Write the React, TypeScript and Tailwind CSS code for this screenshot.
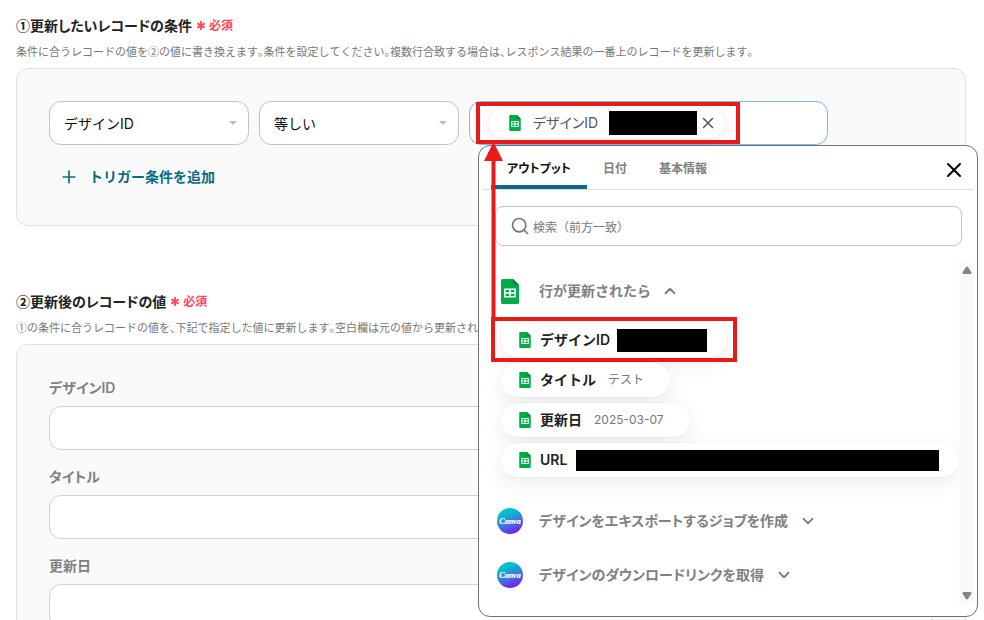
import { ChevronDown, ChevronUp, Plus, Search, X } from "lucide-react";
import type { ReactNode } from "react";

const palt = "[font-feature-settings:'palt'] [font-kerning:none]";

function SheetsIcon({ className }: { className: string }) {
  return (
    <svg viewBox="0 0 18 25" className={`shrink-0 ${className}`} aria-hidden="true">
      <path d="M1.5 0H12l6 6v17.5a1.5 1.5 0 0 1-1.5 1.5h-15A1.5 1.5 0 0 1 0 23.5v-22A1.5 1.5 0 0 1 1.5 0z" fill="#00ac47" />
      <path d="M12 0l6 6h-4.500A1.500 1.500 0 0 1 12 4.500z" fill="#00832d" />
      <path d="M3 9.500h12v9H3z" fill="#fff" />
      <path d="M4.600 11h3.600v2.300H4.600zM9.800 11h3.600v2.300H9.800zM4.600 14.700h3.600V17H4.600zM9.800 14.700h3.600V17H9.800z" fill="#00ac47" />
    </svg>
  );
}

function CanvaIcon() {
  return (
    <svg viewBox="0 0 26 26" className="h-[26px] w-[26px] shrink-0" aria-hidden="true">
      <defs>
        <linearGradient id="canva" x1="0.3" y1="0" x2="0.7" y2="1">
          <stop offset="0.15" stopColor="#00c4cc" />
          <stop offset="0.6" stopColor="#3f73e0" />
          <stop offset="1" stopColor="#7d12f0" />
        </linearGradient>
      </defs>
      <circle cx="13" cy="13" r="13" fill="url(#canva)" />
      <text x="13" y="15.500" textAnchor="middle" fontSize="8" fontStyle="italic" fontFamily="'Liberation Serif', serif" fill="#fff" stroke="#fff" strokeWidth="0.200">
        Canva
      </text>
    </svg>
  );
}

function Heading({ title, note }: { title: string; note: string }) {
  return (
    <div className="font-['Noto_Sans_CJK_JP',sans-serif]">
      <h2 className={`flex items-center gap-[5px] text-sm leading-5 font-semibold text-[#222] ${palt}`}>
        {title}
        <span className="flex items-center gap-1 text-xs text-[#ff4757]">
          <svg viewBox="0 0 8 10" className="h-[10px] w-2" aria-hidden="true">
            <path d="M4 1v9M0.300 3.300l7.400 4.400M7.700 3.300L0.300 7.700" stroke="currentColor" strokeWidth="1.800" />
          </svg>
          必須
        </span>
      </h2>
      <p className="mt-2 text-[11px] leading-4 whitespace-nowrap text-[#777] [font-feature-settings:'halt'] [font-kerning:none]">
        {note}
      </p>
    </div>
  );
}

function SelectBox({ label, value }: { label: string; value: string }) {
  return (
    <div className="relative w-[200px] shrink-0">
      <select
        aria-label={label}
        className="h-11 w-full appearance-none rounded-xl border border-[#c4c4c4] bg-white px-[14px] pt-[2px] text-sm text-[#111]"
      >
        <option>{value}</option>
      </select>
      <svg viewBox="0 0 8 4" className="pointer-events-none absolute top-5 right-3 h-1 w-2" aria-hidden="true">
        <path d="M0 0h8L4 4z" fill="#bdbdbd" />
      </svg>
    </div>
  );
}

function Field({ id, label }: { id: string; label: string }) {
  return (
    <div>
      <label htmlFor={id} className={`mb-[7px] block text-sm leading-[22px] font-semibold text-[#808080] ${palt}`}>
        {label}
      </label>
      <input id={id} type="text" className="block h-11 w-full rounded-xl border border-[#ced3da] bg-white px-4 text-sm" />
    </div>
  );
}

function OutputChip({ label, children }: { label: string; children: ReactNode }) {
  return (
    <button
      type="button"
      className="flex h-[34px] items-center rounded-full bg-white pr-5 pl-[18px] shadow-[0_6px_20px_rgba(0,0,0,0.08),0_0_2px_rgba(0,0,0,0.06)]"
    >
      <SheetsIcon className="h-4 w-3" />
      <span className="ml-[9px] text-sm font-semibold text-[#222]">{label}</span>
      {children}
    </button>
  );
}

function JobRow({ label }: { label: string }) {
  return (
    <button type="button" className="flex h-[26px] items-center text-sm font-semibold text-[#808080]">
      <CanvaIcon />
      <span className={`ml-4 ${palt}`}>{label}</span>
      <ChevronDown className="ml-[11px] h-[18px] w-[18px]" strokeWidth={2.5} />
    </button>
  );
}

function OutputPicker() {
  return (
    <div className="absolute top-11 left-[9px] z-10 w-[500px] rounded-xl border border-[#707070] bg-white pb-3">
      <div className="mx-[3px] flex h-11 items-stretch border-b border-[#dedede] pl-[9px] text-xs font-semibold text-[#808080]">
        <button type="button" className="border-b-4 border-[#0b6b82] px-4 pt-[6px] text-[#111] [font-feature-settings:'palt']">
          アウトプット
        </button>
        <button type="button" className="px-4 pt-[2px]">
          日付
        </button>
        <button type="button" className="px-4 pt-[2px]">
          基本情報
        </button>
        <button type="button" aria-label="閉じる" className="mr-2 ml-auto pt-1 text-black">
          <X className="h-6 w-6" strokeWidth={2} />
        </button>
      </div>
      <label className="mt-4 mr-[15px] ml-4 flex h-10 items-center gap-[3px] rounded-lg border border-[#c4c4c4] pl-[14px] text-[#777]">
        <Search className="h-5 w-5" strokeWidth={2} />
        <input
          type="text"
          aria-label="検索"
          placeholder="検索（前方一致）"
          className="h-full min-w-0 flex-1 bg-transparent pt-[2px] text-xs placeholder:text-[#777]"
        />
      </label>
      <div className="mt-4 mr-[3px] flex h-[342px]">
        <div className="flex min-w-0 flex-1 flex-col overflow-hidden pt-4 pl-[18px]">
          <button type="button" className="ml-1 flex h-[26px] items-center self-start text-sm font-semibold text-[#808080]">
            <SheetsIcon className="h-[25px] w-[18px]" />
            <span className="ml-5">行が更新されたら</span>
            <ChevronUp className="ml-[10px] h-[18px] w-[18px]" strokeWidth={2.5} />
          </button>
          <div className="mt-[19px] ml-1 flex flex-col items-start gap-[6px]">
            <OutputChip label="デザインID">
              <span className="ml-[7px] h-[23px] w-[90px] bg-black" />
            </OutputChip>
            <OutputChip label="タイトル">
              <span className="mx-[6px] ml-3 text-xs text-[#777]">テスト</span>
            </OutputChip>
            <OutputChip label="更新日">
              <span className="mx-[6px] ml-3 text-xs text-[#777]">2025-03-07</span>
            </OutputChip>
            <OutputChip label="URL">
              <span className="ml-[9px] h-[21px] w-[363px] bg-black" />
            </OutputChip>
          </div>
          <div className="mt-[31px] flex flex-col items-start gap-7">
            <JobRow label="デザインをエキスポートするジョブを作成" />
            <JobRow label="デザインのダウンロードリンクを取得" />
          </div>
        </div>
        <div className="flex w-[15px] flex-col items-center justify-between bg-[#fafafa] py-1">
          <svg viewBox="0 0 10 8" className="h-2 w-[10px]" aria-hidden="true">
            <path d="M4.200 0.800h1.600L9.500 6.500 9 8H1L0.500 6.500z" fill="#858585" />
          </svg>
          <svg viewBox="0 0 10 8" className="h-2 w-[10px]" aria-hidden="true">
            <path d="M4.200 7.200h1.600L9.500 1.500 9 0H1L0.500 1.500z" fill="#858585" />
          </svg>
        </div>
      </div>
    </div>
  );
}

function Callouts() {
  return (
    <div className="pointer-events-none" aria-hidden="true">
      <div className="absolute top-[1px] left-[7px] z-20 h-[42px] w-[264px] border-4 border-[#e81b1b]" />
      <div className="absolute top-[216px] left-[22px] z-20 h-[45px] w-[246px] border-4 border-[#e81b1b]" />
      <svg viewBox="0 0 20 178" className="absolute top-[41px] left-[15px] z-20 h-[178px] w-5">
        <path d="M9.500 0L19 19h-7.500v159h-4V19H0z" fill="#e81b1b" />
      </svg>
    </div>
  );
}

export default function App() {
  return (
    <main className="h-screen overflow-hidden bg-white pt-[15px] pr-[18px] pl-4 font-['Inter','Noto_Sans_CJK_JP',sans-serif]">
      <section>
        <Heading
          title="①更新したいレコードの条件"
          note="条件に合うレコードの値を②の値に書き換えます。条件を設定してください。複数行合致する場合は、レスポンス結果の一番上のレコードを更新します。"
        />
        <div className="mt-[9px] rounded-xl border border-[#dfe1e5] bg-[#fafafa] p-8">
          <div className="flex gap-[10px]">
            <SelectBox label="項目" value="デザインID" />
            <SelectBox label="条件" value="等しい" />
            <div className="relative w-[359px] shrink-0">
              <div className="flex h-11 items-center rounded-xl border border-[#7ab8ff] bg-white pl-[19px]">
                <div className="flex h-[30px] items-center rounded-full bg-white pr-2 pl-5 shadow-[0_4px_16px_rgba(0,0,0,0.08),0_0_2px_rgba(0,0,0,0.06)]">
                  <SheetsIcon className="h-4 w-3" />
                  <span className={`ml-3 text-sm text-[#555] ${palt}`}>デザインID</span>
                  <span className="ml-[11px] h-6 w-[88px] bg-black" />
                  <button type="button" aria-label="削除" className="ml-[2px] text-[#555]">
                    <X className="h-[18px] w-[18px]" strokeWidth={2} />
                  </button>
                </div>
              </div>
              <OutputPicker />
              <Callouts />
            </div>
          </div>
          <button type="button" className="mt-4 ml-[10px] flex h-8 items-center gap-[10px] text-sm font-semibold text-[#0b6b82]">
            <Plus className="h-5 w-5" strokeWidth={2} />
            <span>トリガー条件を追加</span>
          </button>
        </div>
      </section>
      <section className="mt-[65px]">
        <Heading
          title="②更新後のレコードの値"
          note="①の条件に合うレコードの値を、下記で指定した値に更新します。空白欄は元の値から更新されません。"
        />
        <div className="mt-[9px] flex flex-col gap-4 rounded-xl border border-[#dfe1e5] bg-[#fafafa] p-8">
          <Field id="design-id" label="デザインID" />
          <Field id="title" label="タイトル" />
          <Field id="updated" label="更新日" />
        </div>
      </section>
    </main>
  );
}
